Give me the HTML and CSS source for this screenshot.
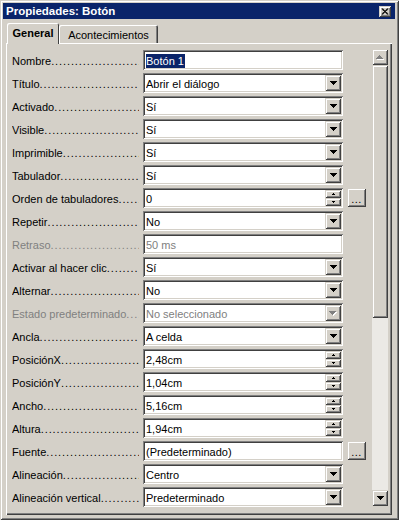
FILE: index.html
```html
<!DOCTYPE html>
<html lang="es">
<head>
    <meta charset="UTF-8">
    <title>Propiedades: Botón</title>
    <link rel="stylesheet" href="styles.css">
</head>
<body>
    <div class="window">
        <div class="titlebar">
            <span class="title">Propiedades: Botón</span>
            <span class="close-btn btn3d">
                <svg width="8" height="7" viewBox="0 0 8 7"><path d="M0 0h2v1H0zM6 0h2v1H6zM1 1h2v1H1zM5 1h2v1H5zM2 2h4v1H2zM3 3h2v1H3zM2 4h4v1H2zM1 5h2v1H1zM5 5h2v1H5zM0 6h2v1H0zM6 6h2v1H6z" fill="#000"/></svg>
            </span>
        </div>

        <div class="tabs">
            <div class="tab active">General</div>
            <div class="tab inactive">Acontecimientos</div>
        </div>

        <div class="panel">
            <div class="list">
                <div class="row">
                    <div class="label"><span>Nombre</span></div>
                    <div class="field"><span class="value"><span class="sel">Botón 1</span></span></div>
                </div>
                <div class="row">
                    <div class="label"><span>Título</span></div>
                    <div class="field"><span class="value">Abrir el diálogo</span><span class="drop-btn btn3d"><svg width="7" height="4"><path d="M0 0h7v1H0zM1 1h5v1H1zM2 2h3v1H2zM3 3h1v1H3z"/></svg></span></div>
                </div>
                <div class="row">
                    <div class="label"><span>Activado</span></div>
                    <div class="field"><span class="value">Sí</span><span class="drop-btn btn3d"><svg width="7" height="4"><path d="M0 0h7v1H0zM1 1h5v1H1zM2 2h3v1H2zM3 3h1v1H3z"/></svg></span></div>
                </div>
                <div class="row">
                    <div class="label"><span>Visible</span></div>
                    <div class="field"><span class="value">Sí</span><span class="drop-btn btn3d"><svg width="7" height="4"><path d="M0 0h7v1H0zM1 1h5v1H1zM2 2h3v1H2zM3 3h1v1H3z"/></svg></span></div>
                </div>
                <div class="row">
                    <div class="label"><span>Imprimible</span></div>
                    <div class="field"><span class="value">Sí</span><span class="drop-btn btn3d"><svg width="7" height="4"><path d="M0 0h7v1H0zM1 1h5v1H1zM2 2h3v1H2zM3 3h1v1H3z"/></svg></span></div>
                </div>
                <div class="row">
                    <div class="label"><span>Tabulador</span></div>
                    <div class="field"><span class="value">Sí</span><span class="drop-btn btn3d"><svg width="7" height="4"><path d="M0 0h7v1H0zM1 1h5v1H1zM2 2h3v1H2zM3 3h1v1H3z"/></svg></span></div>
                </div>
                <div class="row">
                    <div class="label"><span>Orden de tabuladores</span></div>
                    <div class="field"><span class="value">0</span><span class="spin"><span class="spin-btn btn3d"><svg width="3" height="2"><path d="M1 0h1v1H1zM0 1h3v1H0z"/></svg></span><span class="spin-btn btn3d"><svg width="3" height="2"><path d="M0 0h3v1H0zM1 1h1v1H1z"/></svg></span></span></div>
                    <span class="more-btn btn3d">...</span>
                </div>
                <div class="row">
                    <div class="label"><span>Repetir</span></div>
                    <div class="field"><span class="value">No</span><span class="drop-btn btn3d"><svg width="7" height="4"><path d="M0 0h7v1H0zM1 1h5v1H1zM2 2h3v1H2zM3 3h1v1H3z"/></svg></span></div>
                </div>
                <div class="row disabled">
                    <div class="label"><span>Retraso</span></div>
                    <div class="field"><span class="value">50 ms</span></div>
                </div>
                <div class="row">
                    <div class="label"><span>Activar al hacer clic</span></div>
                    <div class="field"><span class="value">Sí</span><span class="drop-btn btn3d"><svg width="7" height="4"><path d="M0 0h7v1H0zM1 1h5v1H1zM2 2h3v1H2zM3 3h1v1H3z"/></svg></span></div>
                </div>
                <div class="row">
                    <div class="label"><span>Alternar</span></div>
                    <div class="field"><span class="value">No</span><span class="drop-btn btn3d"><svg width="7" height="4"><path d="M0 0h7v1H0zM1 1h5v1H1zM2 2h3v1H2zM3 3h1v1H3z"/></svg></span></div>
                </div>
                <div class="row disabled">
                    <div class="label"><span>Estado predeterminado</span></div>
                    <div class="field"><span class="value">No seleccionado</span><span class="drop-btn btn3d"><svg width="8" height="5"><path d="M1 1h7v1H1zM2 2h5v1H2zM3 3h3v1H3zM4 4h1v1H4z" fill="#fff"/><path d="M0 0h7v1H0zM1 1h5v1H1zM2 2h3v1H2zM3 3h1v1H3z" fill="#808080"/></svg></span></div>
                </div>
                <div class="row">
                    <div class="label"><span>Ancla</span></div>
                    <div class="field"><span class="value">A celda</span><span class="drop-btn btn3d"><svg width="7" height="4"><path d="M0 0h7v1H0zM1 1h5v1H1zM2 2h3v1H2zM3 3h1v1H3z"/></svg></span></div>
                </div>
                <div class="row">
                    <div class="label"><span>PosiciónX</span></div>
                    <div class="field"><span class="value">2,48cm</span><span class="spin"><span class="spin-btn btn3d"><svg width="3" height="2"><path d="M1 0h1v1H1zM0 1h3v1H0z"/></svg></span><span class="spin-btn btn3d"><svg width="3" height="2"><path d="M0 0h3v1H0zM1 1h1v1H1z"/></svg></span></span></div>
                </div>
                <div class="row">
                    <div class="label"><span>PosiciónY</span></div>
                    <div class="field"><span class="value">1,04cm</span><span class="spin"><span class="spin-btn btn3d"><svg width="3" height="2"><path d="M1 0h1v1H1zM0 1h3v1H0z"/></svg></span><span class="spin-btn btn3d"><svg width="3" height="2"><path d="M0 0h3v1H0zM1 1h1v1H1z"/></svg></span></span></div>
                </div>
                <div class="row">
                    <div class="label"><span>Ancho</span></div>
                    <div class="field"><span class="value">5,16cm</span><span class="spin"><span class="spin-btn btn3d"><svg width="3" height="2"><path d="M1 0h1v1H1zM0 1h3v1H0z"/></svg></span><span class="spin-btn btn3d"><svg width="3" height="2"><path d="M0 0h3v1H0zM1 1h1v1H1z"/></svg></span></span></div>
                </div>
                <div class="row">
                    <div class="label"><span>Altura</span></div>
                    <div class="field"><span class="value">1,94cm</span><span class="spin"><span class="spin-btn btn3d"><svg width="3" height="2"><path d="M1 0h1v1H1zM0 1h3v1H0z"/></svg></span><span class="spin-btn btn3d"><svg width="3" height="2"><path d="M0 0h3v1H0zM1 1h1v1H1z"/></svg></span></span></div>
                </div>
                <div class="row">
                    <div class="label"><span>Fuente</span></div>
                    <div class="field"><span class="value">(Predeterminado)</span></div>
                    <span class="more-btn btn3d">...</span>
                </div>
                <div class="row">
                    <div class="label"><span>Alineación</span></div>
                    <div class="field"><span class="value">Centro</span><span class="drop-btn btn3d"><svg width="7" height="4"><path d="M0 0h7v1H0zM1 1h5v1H1zM2 2h3v1H2zM3 3h1v1H3z"/></svg></span></div>
                </div>
                <div class="row">
                    <div class="label"><span>Alineación vertical</span></div>
                    <div class="field"><span class="value">Predeterminado</span><span class="drop-btn btn3d"><svg width="7" height="4"><path d="M0 0h7v1H0zM1 1h5v1H1zM2 2h3v1H2zM3 3h1v1H3z"/></svg></span></div>
                </div>
            </div>

            <div class="scrollbar">
                <span class="scroll-btn btn3d"><svg width="8" height="5"><path d="M4 1h1v1H4zM3 2h3v1H3zM2 3h5v1H2zM1 4h7v1H1z" fill="#fff"/><path d="M3 0h1v1H3zM2 1h3v1H2zM1 2h5v1H1zM0 3h7v1H0z" fill="#808080"/></svg></span>
                <span class="thumb btn3d"></span>
                <span class="track"></span>
                <span class="scroll-btn btn3d"><svg width="7" height="4"><path d="M0 0h7v1H0zM1 1h5v1H1zM2 2h3v1H2zM3 3h1v1H3z"/></svg></span>
            </div>
        </div>
    </div>
</body>
</html>
```

FILE: styles.css
```css
body {
    margin: 0;
    padding: 0;
    background: #d4d0c8;
    font-family: "Liberation Sans", Arial, sans-serif;
    font-size: 11px;
    color: #000;
}
.window {
    width: 399px;
    height: 520px;
    box-sizing: border-box;
    padding: 3px 4px 5px 3px;
    display: flex;
    flex-direction: column;
    background: #d4d0c8;
    box-shadow: inset 1px 1px #d4d0c8, inset -1px -1px #404040, inset 2px 2px #fff, inset -2px -2px #808080;
}
.btn3d {
    background: #d4d0c8;
    box-shadow: inset 1px 1px #d4d0c8, inset -1px -1px #404040, inset 2px 2px #fff, inset -2px -2px #808080;
}
.titlebar {
    height: 16px;
    flex: none;
    display: flex;
    align-items: center;
    padding-left: 3px;
    background: #0a246a;
    color: #fff;
}
.title {
    flex: 1;
    font-weight: bold;
    font-size: 11.5px;
}
.close-btn {
    width: 12px;
    height: 11px;
    margin-right: 4px;
    display: flex;
    align-items: center;
    justify-content: center;
}
.close-btn svg {
    transform: scale(0.9);
}

/* pestañas */
.tabs {
    height: 20px;
    flex: none;
    margin-top: 4px;
    padding-left: 4px;
    display: flex;
    align-items: flex-end;
}
.tab {
    box-sizing: border-box;
    display: flex;
    align-items: center;
    justify-content: center;
    background: #d4d0c8;
    border-radius: 2px 2px 0 0;
    box-shadow: inset 1px 1px #fff, inset -1px 0 #404040, inset -2px 0 #808080;
}
.tab.active {
    width: 52px;
    height: 21px;
    margin-bottom: -1px;
    padding-bottom: 1px;
    position: relative;
    z-index: 1;
    font-weight: bold;
    box-shadow: inset 1px 1px #fff, inset -1px 0 #404040;
}
.tab.inactive {
    width: 99px;
    height: 18px;
    padding-top: 1px;
}

.panel {
    flex: 1;
    margin: 0 3px;
    display: flex;
    align-items: flex-start;
    padding: 7px 4px 0 6px;
    box-shadow: inset 1px 1px #fff, inset -1px -1px #404040, inset -2px -2px #808080;
    overflow: hidden;
}
.list {
    flex: 1;
    display: flex;
    flex-direction: column;
    gap: 3px;
    margin-right: 4px;
    overflow: hidden;
    align-self: stretch;
}
.row {
    display: flex;
    gap: 4px;
    height: 20px;
    flex: none;
}
.label {
    width: 127px;
    height: 20px;
    box-sizing: border-box;
    padding-top: 3px;
    line-height: 17px;
    display: flex;
    white-space: nowrap;
    overflow: hidden;
}
.label::after {
    content: "....................................................";
    flex: 1;
    min-width: 0;
    overflow: hidden;
    letter-spacing: 0.9px;
}
.field {
    width: 200px;
    height: 20px;
    box-sizing: border-box;
    display: flex;
    padding: 2px 2px 2px 3px;
    background: #fff;
    box-shadow: inset 1px 1px #808080, inset -1px -1px #fff, inset 2px 2px #404040, inset -2px -2px #d4d0c8;
}
.value {
    flex: 1;
    height: 16px;
    box-sizing: border-box;
    padding-top: 1px;
    line-height: 16px;
    white-space: nowrap;
    overflow: hidden;
}
.sel {
    background: #0a246a;
    color: #fff;
    padding: 1px 1px 1px 0;
}
.disabled .label,
.disabled .value {
    color: #808080;
}
.drop-btn {
    width: 16px;
    height: 16px;
    flex: none;
    display: flex;
    align-items: center;
    justify-content: center;
}
.spin {
    width: 16px;
    flex: none;
    display: flex;
    flex-direction: column;
}
.spin-btn {
    height: 8px;
    display: flex;
    align-items: center;
    justify-content: center;
}
.more-btn {
    width: 19px;
    height: 19px;
    display: flex;
    align-items: center;
    justify-content: center;
    padding-top: 2px;
    box-sizing: border-box;
    letter-spacing: 0.5px;
}

.scrollbar {
    width: 16px;
    height: 457px;
    flex: none;
    margin-top: -1px;
    display: flex;
    flex-direction: column;
}
.scroll-btn {
    height: 16px;
    flex: none;
    display: flex;
    align-items: center;
    justify-content: center;
}
.thumb {
    height: 253px;
    flex: none;
}
.track {
    flex: 1;
    background: #ebe9e5;
}
```
